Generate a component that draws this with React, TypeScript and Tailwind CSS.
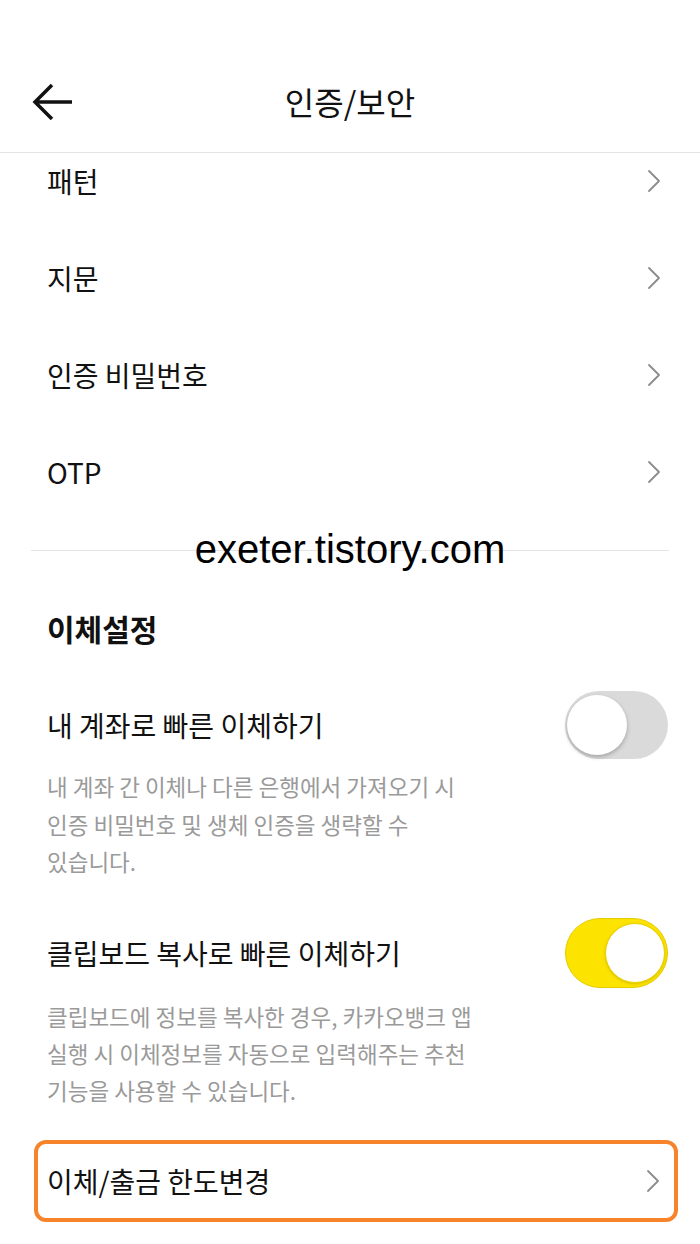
import React from "react";

const Chevron = () => (
  <svg width="14" height="24" viewBox="0 0 14 24" fill="none">
    <path d="M2 2 L12 12 L2 22" stroke="#8c8c8c" strokeWidth="1.8" strokeLinecap="round" strokeLinejoin="round" />
  </svg>
);

const Toggle = ({ on }: { on: boolean }) =>
  on ? (
    <div className="w-[103px] h-[70px] rounded-full bg-[#fde300] border border-[#e3cb00] flex items-center justify-end pr-[2px]">
      <div className="w-[60px] h-[60px] rounded-full bg-white border border-[#ead100] shadow-[0_1px_3px_rgba(0,0,0,0.15)]" />
    </div>
  ) : (
    <div className="w-[103px] h-[68px] rounded-full bg-[#dadada] flex items-center pl-[2px]">
      <div className="w-[60px] h-[60px] rounded-full bg-white shadow-[0_2px_4px_rgba(0,0,0,0.25)]" />
    </div>
  );

const menuItems = ["패턴", "지문", "인증 비밀번호", "OTP"];

export default function App() {
  return (
    <div
      className="relative w-[700px] h-[1244px] bg-white overflow-hidden text-[#111]"
      style={{ fontFamily: '"Noto Sans CJK KR", "Noto Sans", sans-serif' }}
    >
      {/* status bar area */}
      <div className="h-[60px]" />

      {/* header */}
      <header className="h-[93px] pb-[10px] border-b border-[#e4e4e4] grid grid-cols-[1fr_auto_1fr] items-center">
        <div className="pl-[31px] pt-[2px]">
          <svg width="44" height="40" viewBox="0 0 44 40" fill="none">
            <path d="M4 20 H41" stroke="#111" strokeWidth="3.5" />
            <path d="M21 3 L4 20 L21 37" stroke="#111" strokeWidth="3.5" strokeLinejoin="miter" />
          </svg>
        </div>
        <h1 className="text-[32px] leading-[40px] font-normal">인증/보안</h1>
        <div />
      </header>

      {/* auth menu, scrolled */}
      <div className="overflow-hidden">
        <ul className="-mt-[21px]">
          {menuItems.map((label) => (
            <li key={label} className="h-[97px] flex items-center justify-between pl-[47px] pr-[39px]">
              <span className="text-[28px] leading-[36px]">{label}</span>
              <Chevron />
            </li>
          ))}
        </ul>
      </div>

      <div className="mt-[30px] mx-[31px] h-px bg-[#e4e4e4]" />

      {/* transfer settings */}
      <h2 className="mt-[57px] pl-[47px] text-[30px] leading-[40px] font-bold">이체설정</h2>

      <div className="mt-[42px] h-[70px] flex items-center justify-between pl-[47px] pr-[32px]">
        <span className="text-[28px] leading-[36px]">내 계좌로 빠른 이체하기</span>
        <Toggle on={false} />
      </div>
      <p className="mt-[8px] pl-[47px] text-[22.5px] leading-[37.5px] text-[#9a9a9a]">
        내 계좌 간 이체나 다른 은행에서 가져오기 시<br />
        인증 비밀번호 및 생체 인증을 생략할 수<br />
        있습니다.
      </p>

      <div className="mt-[37px] h-[70px] flex items-center justify-between pl-[47px] pr-[32px]">
        <span className="text-[28px] leading-[36px]">클립보드 복사로 빠른 이체하기</span>
        <Toggle on={true} />
      </div>
      <p className="mt-[10px] pl-[47px] text-[22.5px] leading-[37px] text-[#9a9a9a]">
        클립보드에 정보를 복사한 경우, 카카오뱅크 앱<br />
        실행 시 이체정보를 자동으로 입력해주는 추천<br />
        기능을 사용할 수 있습니다.
      </p>

      <div className="mt-[31px] ml-[34px] mr-[22px] h-[82px] border-[4px] border-[#f7832a] rounded-[12px] flex items-center justify-between pl-[9px] pr-[14px]">
        <span className="text-[28px] leading-[36px]">이체/출금 한도변경</span>
        <Chevron />
      </div>

      {/* watermark */}
      <div
        className="absolute left-0 right-0 top-[529px] text-center text-[40px] leading-none text-black"
        style={{ fontFamily: '"Liberation Sans", Arial, sans-serif' }}
      >
        exeter.tistory.com
      </div>
    </div>
  );
}
